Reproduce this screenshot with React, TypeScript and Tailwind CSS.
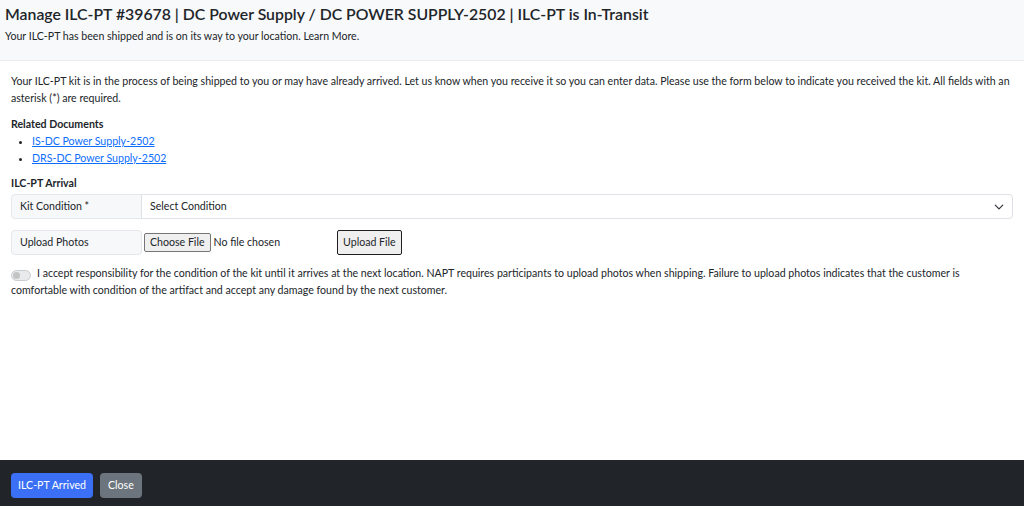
import React from 'react';

export default function App() {
  return (
    <div className="flex h-screen flex-col bg-white font-['Lato',sans-serif] text-[10.6px] text-[#212529]">
      {/* Header */}
      <header className="h-[61px] border-b border-[#e9ecef] bg-[#f8f9fa] px-[5px] pt-[4px]">
        <h1 className="text-[15.8px] font-semibold leading-[20px]">
          Manage ILC-PT #39678 | DC Power Supply / DC POWER SUPPLY-2502 | ILC-PT is In-Transit
        </h1>
        <p className="mt-[4px] leading-[16px]">
          Your ILC-PT has been shipped and is on its way to your location. Learn More.
        </p>
      </header>

      {/* Body */}
      <main className="flex-1 px-[11px] pt-[12px]">
        <p className="leading-[17px]">
          Your ILC-PT kit is in the process of being shipped to you or may have already arrived. Let us know when you
          receive it so you can enter data. Please use the form below to indicate you received the kit. All fields with an
          asterisk (*) are required.
        </p>

        <h6 className="mt-[9px] font-bold leading-[17px]">Related Documents</h6>
        <ul className="list-disc pl-[21px] leading-[17px]">
          <li>
            <a href="#" className="text-[#0d6efd] underline">IS-DC Power Supply-2502</a>
          </li>
          <li>
            <a href="#" className="text-[#0d6efd] underline">DRS-DC Power Supply-2502</a>
          </li>
        </ul>

        <h6 className="mt-[8px] font-bold leading-[17px]">ILC-PT Arrival</h6>

        {/* Kit condition */}
        <div className="mt-[2px] flex h-[25px]">
          <span className="flex w-[131px] items-center rounded-l border border-[#e5e7ea] bg-[#f7f8f9] px-[8px]">
            Kit Condition *
          </span>
          <div className="-ml-px flex flex-1 items-center justify-between rounded-r border border-[#dee2e6] px-[8px]">
            <span>Select Condition</span>
            <svg width="10" height="10" viewBox="0 0 16 16" fill="none" stroke="#343a40" strokeWidth="2" strokeLinecap="round" strokeLinejoin="round">
              <path d="M2 5l6 6 6-6" />
            </svg>
          </div>
        </div>

        {/* Upload photos */}
        <div className="mt-[11px] flex h-[25px] items-center">
          <span className="flex h-full w-[131px] items-center rounded border border-[#e5e7ea] bg-[#f7f8f9] px-[8px]">
            Upload Photos
          </span>
          <button className="ml-[2px] h-[19px] rounded-[2px] border border-[#767676] bg-[#efefef] px-[5px] leading-none">
            Choose File
          </button>
          <span className="ml-[3px]">No file chosen</span>
          <button className="ml-[57px] h-[25px] rounded-[2px] border border-[#1f1f1f] bg-[#efefef] px-[5px]">
            Upload File
          </button>
        </div>

        {/* Acknowledgement */}
        <div className="mt-[10px] leading-[17px]">
          <span className="relative mr-[6px] inline-block h-[11px] w-[20px] translate-y-[1px] rounded-full border border-[#c9cdd1] bg-[#e9eaeb] align-middle">
            <span className="absolute left-[1px] top-[1px] h-[7px] w-[7px] rounded-full bg-[#c4c4c4]" />
          </span>
          I accept responsibility for the condition of the kit until it arrives at the next location. NAPT requires
          participants to upload photos when shipping. Failure to upload photos indicates that the customer is comfortable
          with condition of the artifact and accept any damage found by the next customer.
        </div>
      </main>

      {/* Footer */}
      <footer className="flex h-[46px] items-start gap-[7px] bg-[#212529] px-[11px] pt-[13px]">
        <button className="h-[25px] rounded bg-[#3b6ff5] px-[7px] text-white">ILC-PT Arrived</button>
        <button className="h-[25px] rounded bg-[#6c757d] px-[8px] text-white">Close</button>
      </footer>
    </div>
  );
}
